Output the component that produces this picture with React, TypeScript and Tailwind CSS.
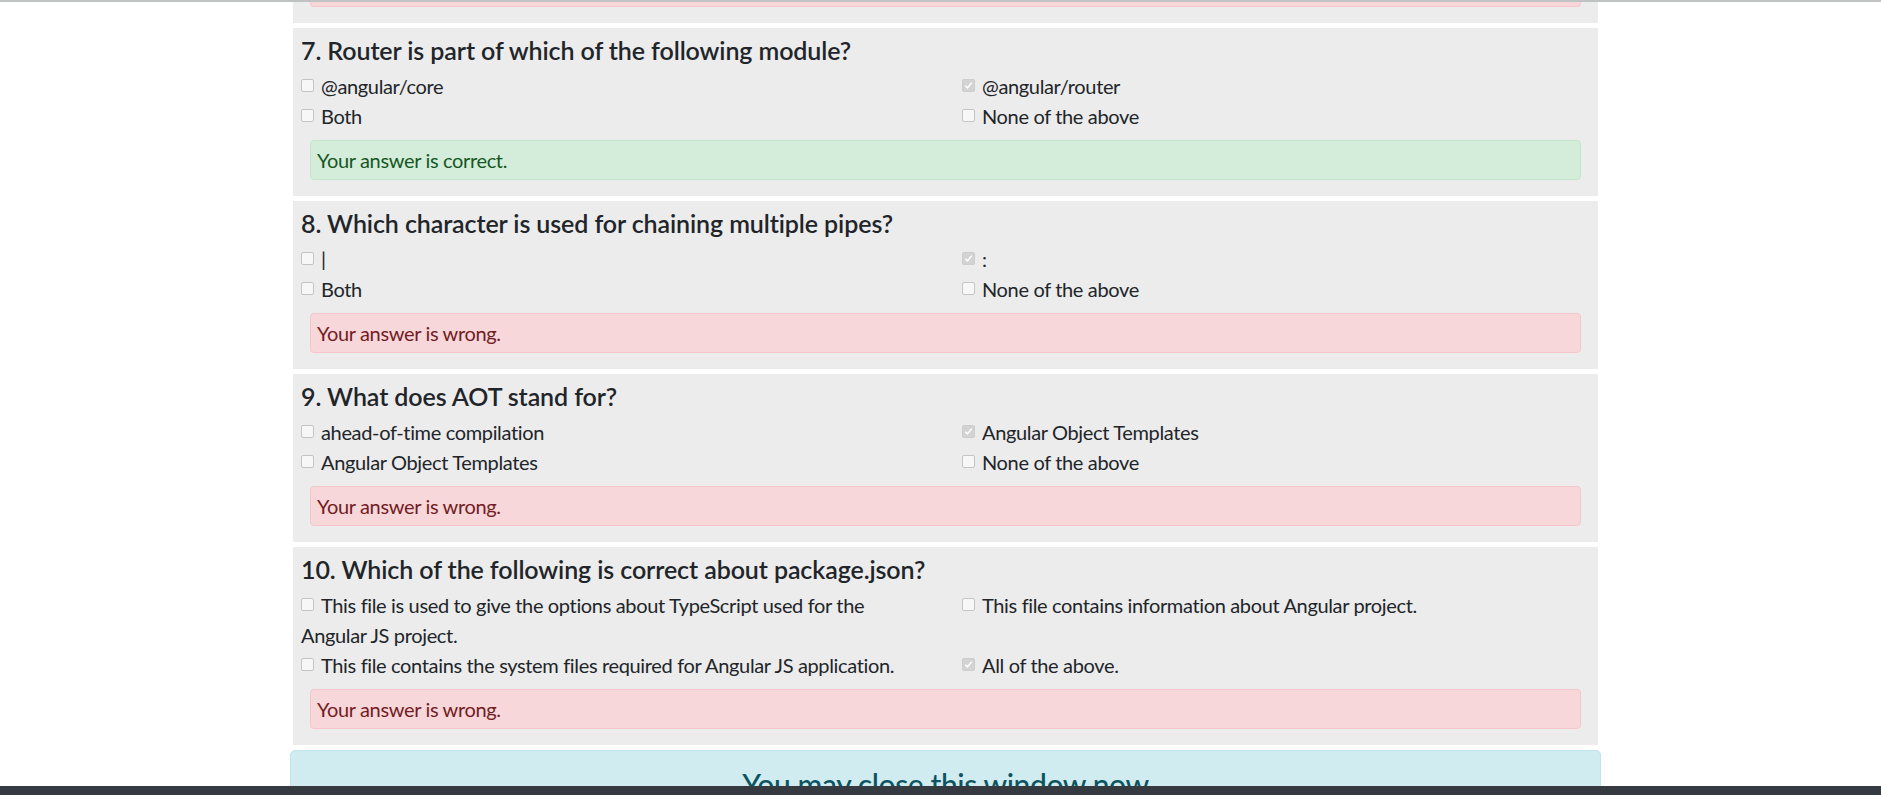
import React from "react";

type Question = {
  no: number;
  text: string;
  options: string[];
  picked: number;
  correct: boolean;
};

const Questions: Question[] = [
  {
    no: 7,
    text: "Router is part of which of the following module?",
    options: ["@angular/core", "@angular/router", "Both", "None of the above"],
    picked: 1,
    correct: true,
  },
  {
    no: 8,
    text: "Which character is used for chaining multiple pipes?",
    options: ["|", ":", "Both", "None of the above"],
    picked: 1,
    correct: false,
  },
  {
    no: 9,
    text: "What does AOT stand for?",
    options: [
      "ahead-of-time compilation",
      "Angular Object Templates",
      "Angular Object Templates",
      "None of the above",
    ],
    picked: 1,
    correct: false,
  },
  {
    no: 10,
    text: "Which of the following is correct about package.json?",
    options: [
      "This file is used to give the options about TypeScript used for the Angular JS project.",
      "This file contains information about Angular project.",
      "This file contains the system files required for Angular JS application.",
      "All of the above.",
    ],
    picked: 3,
    correct: false,
  },
];

function Box({ checked }: { checked: boolean }) {
  return (
    <span
      className={
        checked
          ? "inline-block align-[2px] mr-[7px] w-[13px] h-[13px] rounded-[2px] bg-[#d3d3d3] border border-[#cdcdcd]"
          : "inline-block align-[2px] mr-[7px] w-[13px] h-[13px] rounded-[2px] bg-[#f7f7f7] border border-[#c4c4c4]"
      }
    >
      {checked && (
        <svg viewBox="0 0 11 11" className="block w-[11px] h-[11px]">
          <path d="M2.3 5.8 L4.4 7.9 L8.7 2.8" fill="none" stroke="#ffffff" strokeWidth="1.5" />
        </svg>
      )}
    </span>
  );
}

function QuestionCard({ q }: { q: Question }) {
  return (
    <div className="bg-[#ececec] mx-[3px] pt-[7px] pb-[16px] px-[8px]">
      <h5 className="text-[25px] leading-[30px] font-semibold tracking-[-0.1px] mb-[6px]">
        {q.no}. {q.text}
      </h5>
      <div className="grid grid-cols-2 gap-x-[33px]">
        {q.options.map((opt, idx) => (
          <div key={idx} className="text-[20px] leading-[30px] tracking-[-0.35px]">
            <Box checked={idx === q.picked} />
            {opt}
          </div>
        ))}
      </div>
      {q.correct ? (
        <div className="mt-[9px] mx-[9px] h-[40px] px-[6px] py-[4px] text-[20px] leading-[30px] tracking-[-0.35px] rounded-[4px] border border-[#c3e6cb] bg-[#d4edda] text-[#155724]">
          Your answer is correct.
        </div>
      ) : (
        <div className="mt-[9px] mx-[9px] h-[40px] px-[6px] py-[4px] text-[20px] leading-[30px] tracking-[-0.35px] rounded-[4px] border border-[#f5c6cb] bg-[#f8d7da] text-[#721c24]">
          Your answer is wrong.
        </div>
      )}
    </div>
  );
}

export default function App() {
  return (
    <div className="min-h-screen bg-white text-[#212529] font-['Lato','Segoe_UI',sans-serif] overflow-hidden">
      <div className="fixed top-0 left-0 right-0 h-[2px] bg-[#bfc4c3]" />

      <div className="w-[1311px] ml-[290px] flex flex-col gap-[5px]">
        {/* tail of question 6, scrolled off */}
        <div className="bg-[#ececec] mx-[3px] h-[23px] px-[8px]">
          <div className="mx-[9px] h-[7px] rounded-b-[4px] border border-t-0 border-[#f5c6cb] bg-[#f8d7da]" />
        </div>

        {Questions.map((q) => (
          <QuestionCard key={q.no} q={q} />
        ))}

        <div className="h-[120px] rounded-[5px] border border-[#bee5eb] bg-[#d1ecf1] pt-[15px] text-center">
          <h4 className="text-[30px] leading-[36px] font-medium tracking-[-0.4px] text-[#0c5460]">
            You may close this window now
          </h4>
        </div>
      </div>

      <div className="fixed bottom-0 left-0 right-0 h-[9px] bg-[#343a40]" />
    </div>
  );
}
